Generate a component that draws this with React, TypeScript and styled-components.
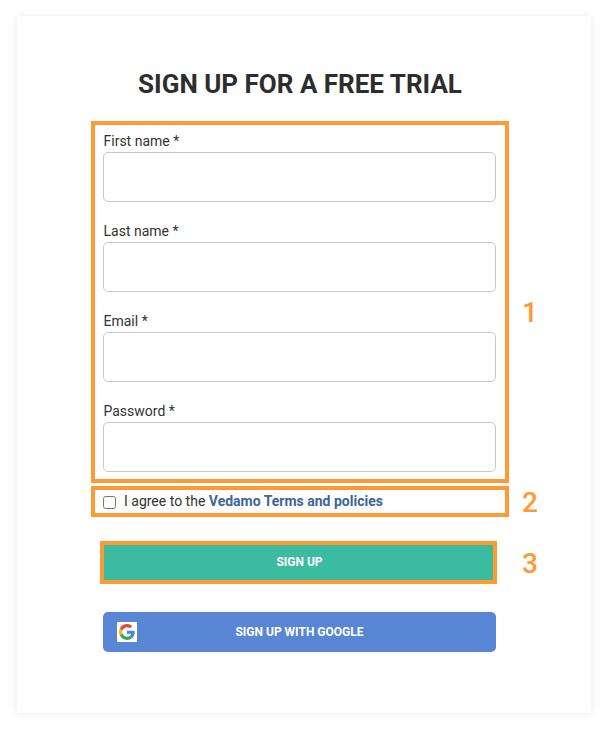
import React from "react";
import styled, { createGlobalStyle } from "styled-components";

const Global = createGlobalStyle`
  html, body { margin: 0; padding: 0; background: #fff; }
  body { font-family: Roboto, "Liberation Sans", sans-serif; color: #333; }
  * { box-sizing: border-box; }
`;

const Page = styled.div`
  padding: 16px 17px;
  width: 608px;
  height: 729px;
`;

const Card = styled.main`
  width: 574px;
  height: 697px;
  padding: 51px 0 0 74px;
  background: #fff;
  box-shadow: 0 0 8px rgba(0, 0, 0, 0.09);
`;

const Title = styled.h1`
  width: 418px;
  margin: 0 0 19px;
  height: 35px;
  line-height: 35px;
  text-align: center;
  font-size: 26px;
  font-weight: 700;
  color: #2d2d2d;
`;

const Rows = styled.div`
  display: grid;
  grid-template-columns: 418px auto;
  column-gap: 13px;
  align-items: center;
`;

const Outline = styled.div`
  border: 4px solid #ff9933;
`;

const FieldsBox = styled(Outline)`
  padding: 6px 8px 7px;
  display: flex;
  flex-direction: column;
  gap: 18px;
`;

const Field = styled.label`
  display: flex;
  flex-direction: column;
  gap: 1px;
  font-size: 14px;
  line-height: 20px;
  color: #333;
  &:not(:first-child) {
    padding-top: 1px;
  }
`;

const FieldText = styled.span`
  padding-left: 0.5px;
`;

const Input = styled.input`
  display: block;
  width: 393px;
  height: 50px;
  border: 1px solid #c8c8c8;
  border-radius: 5px;
  background: #fff;
  outline: none;
`;

const Marker = styled.div<{ $shift?: number }>`
  font-size: 28px;
  line-height: 28px;
  font-weight: 500;
  color: #ff9933;
  padding-top: ${(p) => p.$shift ?? 0}px;
`;

const AgreeBox = styled(Outline)`
  margin-top: 3px;
  height: 31px;
  padding: 0 8px 2px;
  display: flex;
  align-items: center;
  font-size: 14px;
  color: #333;
`;

const Check = styled.input`
  width: 13px;
  height: 13px;
  margin: 4px 8px 0 0;
`;

const TermsLink = styled.a`
  color: #3d6597;
  font-weight: 700;
  text-decoration: none;
  margin-left: 3.5px;
`;

const SubmitFrame = styled(Outline)`
  margin: 24px 0 0 9px;
  width: 397px;
  height: 43px;
`;

const SubmitButton = styled.button`
  display: block;
  width: 100%;
  height: 100%;
  border: 0;
  padding: 0 0 2px 2px;
  background: #3bbba0;
  color: #fff;
  font: 700 12px Roboto, sans-serif;
`;

const MarkerThree = styled(Marker)`
  margin-top: 26px;
`;

const GoogleButton = styled.button`
  position: relative;
  display: block;
  width: 393px;
  height: 40px;
  margin: 28px 0 0 12px;
  border: 0;
  border-radius: 5px;
  background: #5885d4;
  color: #fff;
  font: 700 12px Roboto, sans-serif;
`;

const GoogleIcon = styled.span`
  position: absolute;
  left: 14px;
  top: 10px;
  width: 20px;
  height: 20px;
  background: #fff;
  display: flex;
  align-items: center;
  justify-content: center;
`;

const fields = ["First name *", "Last name *", "Email *", "Password *"];

export default function App() {
  return (
    <Page>
      <Global />
      <Card>
        <Title>SIGN UP FOR A FREE TRIAL</Title>
        <Rows>
          <FieldsBox>
            {fields.map((f) => (
              <Field key={f}>
                <FieldText>{f}</FieldText>
                <Input />
              </Field>
            ))}
          </FieldsBox>
          <Marker $shift={22}>1</Marker>
          <AgreeBox>
            <Check type="checkbox" />
            I agree to the <TermsLink href="#">Vedamo Terms and policies</TermsLink>
          </AgreeBox>
          <Marker $shift={6}>2</Marker>
          <SubmitFrame>
            <SubmitButton>SIGN UP</SubmitButton>
          </SubmitFrame>
          <MarkerThree>3</MarkerThree>
        </Rows>
        <GoogleButton>
          <GoogleIcon>
            <svg width="16" height="16" viewBox="0 0 48 48">
              <path fill="#EA4335" d="M24 9.5c3.54 0 6.71 1.22 9.21 3.6l6.85-6.85C35.9 2.38 30.47 0 24 0 14.62 0 6.51 5.38 2.56 13.22l7.98 6.19C12.43 13.72 17.74 9.5 24 9.5z" />
              <path fill="#4285F4" d="M46.98 24.55c0-1.57-.15-3.09-.38-4.55H24v9.02h12.94c-.58 2.96-2.26 5.48-4.78 7.18l7.73 6c4.51-4.18 7.09-10.36 7.09-17.65z" />
              <path fill="#FBBC05" d="M10.53 28.59c-.48-1.45-.76-2.99-.76-4.59s.27-3.14.76-4.59l-7.98-6.19C.92 16.46 0 20.12 0 24c0 3.88.92 7.54 2.56 10.78l7.97-6.19z" />
              <path fill="#34A853" d="M24 48c6.48 0 11.93-2.13 15.89-5.81l-7.73-6c-2.15 1.45-4.92 2.3-8.16 2.3-6.26 0-11.57-4.22-13.47-9.91l-7.98 6.19C6.51 42.62 14.62 48 24 48z" />
            </svg>
          </GoogleIcon>
          SIGN UP WITH GOOGLE
        </GoogleButton>
      </Card>
    </Page>
  );
}
